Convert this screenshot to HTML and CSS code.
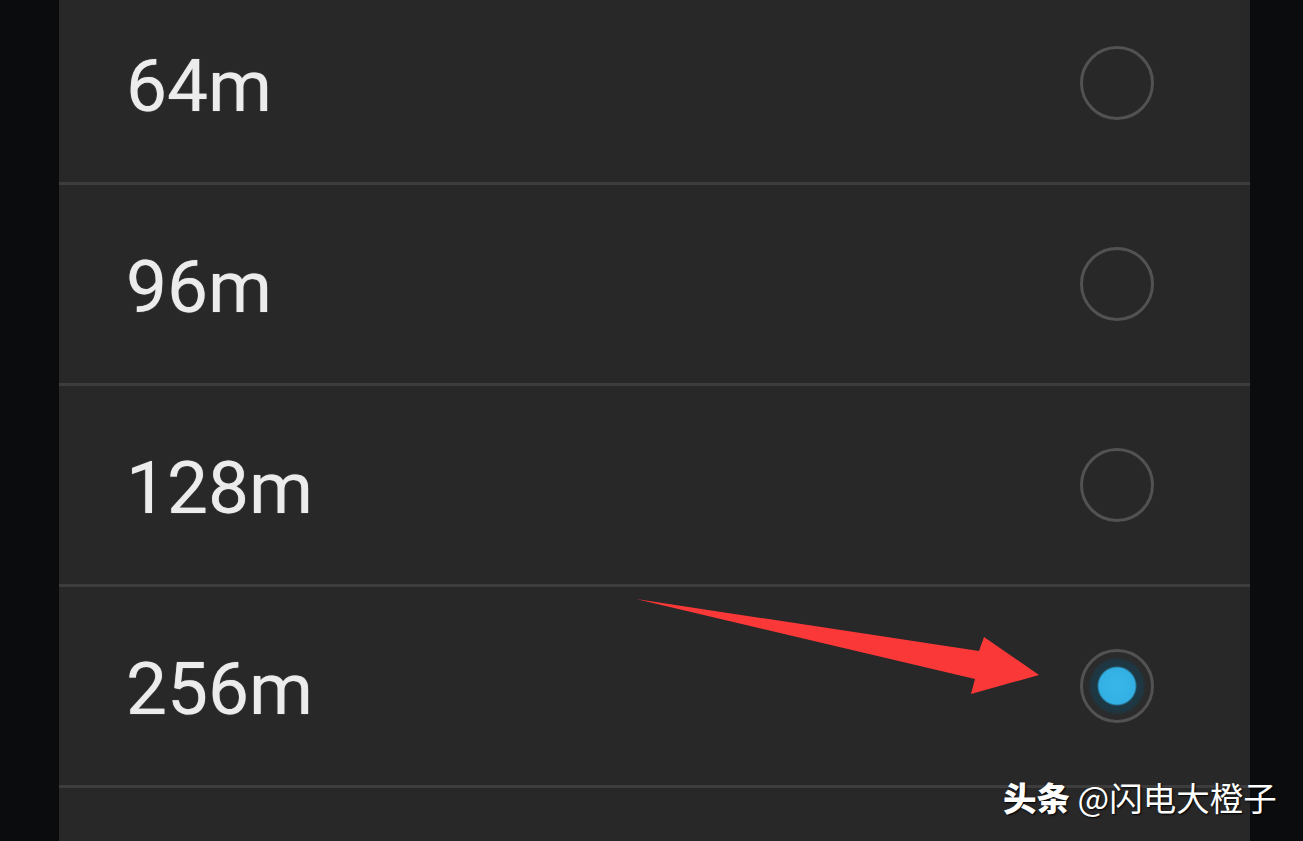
FILE: index.html
```
<!DOCTYPE html>
<html>
  <head>
    <meta charset="UTF-8">
    <link rel="stylesheet" href="styles.css">
    <title>Memory</title>
  </head>
  <body>
    <div class="list">
      <div class="row">
        <span class="label">64m</span>
        <span class="radio"></span>
      </div>
      <div class="row">
        <span class="label">96m</span>
        <span class="radio"></span>
      </div>
      <div class="row">
        <span class="label">128m</span>
        <span class="radio"></span>
      </div>
      <div class="row">
        <span class="label">256m</span>
        <span class="radio checked"></span>
      </div>
    </div>

    <svg class="arrow" width="1303" height="841" viewBox="0 0 1303 841">
      <polygon points="636,599 979,651 984,637 1039,675 971,694 975,679" fill="#fb3838"/>
    </svg>

    <div class="mark"><b>头条</b> @闪电大橙子</div>
  </body>
</html>
```

FILE: styles.css
```
html, body {
  margin: 0;
  height: 100%;
  overflow: hidden;
}
body {
  background: #0b0c0e;
  font-family: Roboto, "Noto Sans", sans-serif;
  position: relative;
}
.list {
  margin: -16px 53px 0 59px;
  background: #282828;
  height: 857px;
  overflow: hidden;
}
.row {
  height: 193px;
  border-bottom: 3px solid #3d3d3d;
  display: flex;
  align-items: center;
  justify-content: space-between;
  padding: 5px 96px 0 67px;
}
.label {
  color: #ececec;
  font-size: 73px;
  text-shadow: 0 0 1px rgba(255, 255, 255, 0.6);
}
.radio {
  width: 74px;
  height: 74px;
  border: 3px solid #525252;
  border-radius: 50%;
  box-sizing: border-box;
  margin-top: -6px;
}
.radio.checked {
  background: radial-gradient(circle, #38b6ea 0, #33b0e3 18px, #1c3945 20px, #1f3641 26px, #2b2b2b 29px);
}
.arrow {
  position: absolute;
  left: 0;
  top: 0;
}
.mark {
  position: absolute;
  left: 1003px;
  top: 772px;
  color: #fff;
  font-family: "Noto Sans CJK SC", sans-serif;
  font-size: 33.5px;
  text-shadow: 1px 1px 2px #000;
  white-space: nowrap;
}
.mark b {
  font-weight: 900;
}
```
